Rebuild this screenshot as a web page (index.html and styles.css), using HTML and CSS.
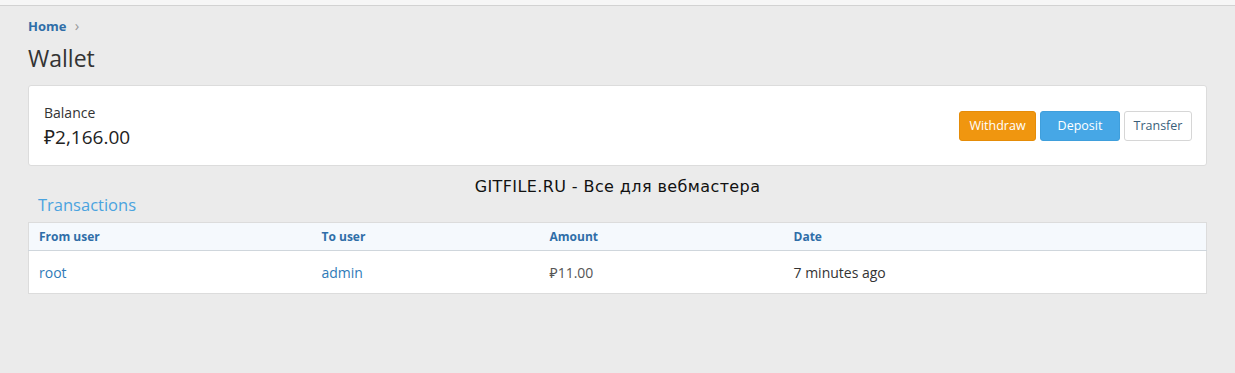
FILE: index.html
```html
<!DOCTYPE html>
<html lang="en">
<head>
    <meta charset="UTF-8">
    <title>Wallet</title>
    <link rel="stylesheet" href="styles.css">
</head>
<body>
    <div class="topbar"></div>
    <div class="page">
        <div class="breadcrumb">
            <a href="#">Home</a>
            <span class="sep">&rsaquo;</span>
        </div>
        <h1>Wallet</h1>

        <div class="balance-card">
            <div class="balance">
                <div class="balance-label">Balance</div>
                <div class="balance-value">₽2,166.00</div>
            </div>
            <div class="actions">
                <button class="btn btn-withdraw">Withdraw</button>
                <button class="btn btn-deposit">Deposit</button>
                <button class="btn btn-transfer">Transfer</button>
            </div>
        </div>

        <h2>Transactions</h2>
        <table class="transactions">
            <colgroup>
                <col class="c1">
                <col class="c2">
                <col class="c3">
                <col>
            </colgroup>
            <thead>
                <tr>
                    <th>From user</th>
                    <th>To user</th>
                    <th>Amount</th>
                    <th>Date</th>
                </tr>
            </thead>
            <tbody>
                <tr>
                    <td><a href="#">root</a></td>
                    <td><a href="#">admin</a></td>
                    <td class="amount">₽11.00</td>
                    <td>7 minutes ago</td>
                </tr>
            </tbody>
        </table>
    </div>

    <!-- watermark overlay -->
    <div class="watermark">GITFILE.RU - Все для вебмастера</div>
</body>
</html>
```

FILE: styles.css
```css
body {
    margin: 0;
    background: #ebebeb;
    font-family: "Open Sans", "Noto Sans", sans-serif;
    color: #333;
    position: relative;
}
.topbar {
    height: 5px;
    background: #f6f6f6;
    border-bottom: 1px solid #d2d2d2;
}
.page {
    padding: 0 28px;
}
.breadcrumb {
    padding-top: 10px;
    font-size: 13px;
    line-height: 18px;
}
.breadcrumb a {
    color: #2f6ea8;
    font-weight: bold;
    text-decoration: none;
}
.breadcrumb .sep {
    color: #999;
    margin-left: 5px;
    font-size: 15px;
}
h1 {
    margin: 9px 0 0;
    font-size: 23px;
    font-weight: normal;
    line-height: 28px;
    color: #333;
}
.balance-card {
    margin-top: 13px;
    background: #fff;
    border: 1px solid #dcdcdc;
    border-radius: 3px;
    height: 79px;
    display: flex;
    justify-content: space-between;
    align-items: center;
    padding: 0 14px 0 15px;
}
.balance-label {
    font-size: 14px;
    line-height: 20px;
    color: #333;
}
.balance-value {
    font-size: 19px;
    line-height: 26px;
    color: #222;
    margin-top: 1px;
}
.balance {
    margin-top: 1px;
}
.actions {
    display: flex;
    gap: 4px;
}
.btn {
    font-family: "Open Sans", "Noto Sans", sans-serif;
    font-size: 12.5px;
    height: 30px;
    border-radius: 3px;
    border: 1px solid transparent;
    cursor: pointer;
    color: #fff;
}
.btn-withdraw {
    width: 77px;
    background: #f0960f;
    border-color: #e58c08;
}
.btn-deposit {
    width: 80px;
    background: #46a7e6;
    border-color: #3f9fdc;
}
.btn-transfer {
    width: 68px;
    background: #fff;
    border-color: #d6d6d6;
    color: #3a5f7a;
}
.watermark {
    position: absolute;
    top: 177px;
    left: 0;
    right: 0;
    text-align: center;
    font-family: "DejaVu Sans", sans-serif;
    font-size: 16px;
    letter-spacing: 0.4px;
    line-height: 20px;
    color: #111;
}
h2 {
    margin: 27px 0 0 10px;
    font-size: 16.5px;
    font-weight: normal;
    line-height: 24px;
    color: #4aa3df;
}
.transactions {
    margin-top: 5px;
    width: 100%;
    border-collapse: collapse;
    background: #fff;
    border: 1px solid #dcdcdc;
}
.transactions col.c1 { width: 283px; }
.transactions col.c2 { width: 228px; }
.transactions col.c3 { width: 244px; }
.transactions th {
    text-align: left;
    font-size: 12px;
    font-weight: bold;
    color: #2f6ea8;
    background: #f5f9fd;
    height: 27px;
    padding: 0 10px;
    border-bottom: 1px solid #cfd6dc;
}
.transactions td {
    font-size: 14px;
    height: 42px;
    padding: 0 10px;
    color: #333;
}
.transactions td a {
    color: #2f7bb8;
    text-decoration: none;
}
.transactions td.amount {
    color: #555;
}
```
